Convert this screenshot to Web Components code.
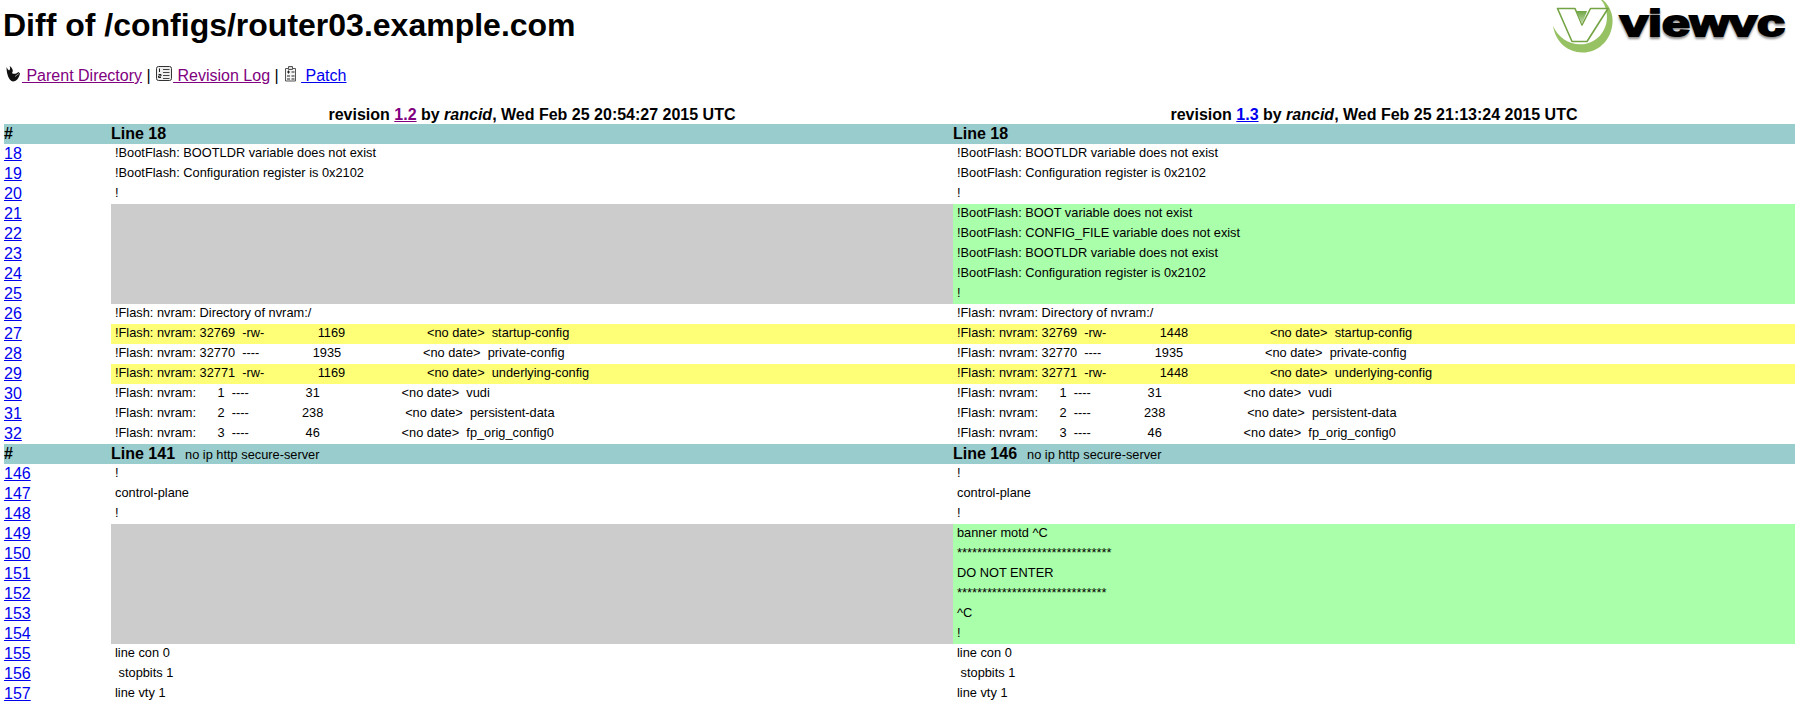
<!DOCTYPE html>
<html><head><meta charset="utf-8"><title>Diff of /configs/router03.example.com</title>
<style>
html,body{margin:0;padding:0;background:#fff;color:#000;font-family:"Liberation Sans",Arial,sans-serif;overflow:hidden}
</style></head><body>
<vv-page>
  <vv-header slot="header">Diff of /configs/router03.example.com</vv-header>
  <vv-nav slot="nav"></vv-nav>
  <diff-view slot="diff">
    <rev-row><a slot="a1" href="#r12" class="v">1.2</a><span slot="u1">rancid</span><span slot="d1">Wed Feb 25 20:54:27 2015 UTC</span><a slot="a2" href="#r13">1.3</a><span slot="u2">rancid</span><span slot="d2">Wed Feb 25 21:13:24 2015 UTC</span></rev-row>
    <hunk-row><span slot="l">Line 18</span><span slot="r">Line 18</span></hunk-row>
    <diff-row n="18"><span slot="l">!BootFlash: BOOTLDR variable does not exist</span><span slot="r">!BootFlash: BOOTLDR variable does not exist</span></diff-row>
    <diff-row n="19"><span slot="l">!BootFlash: Configuration register is 0x2102</span><span slot="r">!BootFlash: Configuration register is 0x2102</span></diff-row>
    <diff-row n="20"><span slot="l">!</span><span slot="r">!</span></diff-row>
    <diff-row n="21" kind="add"><span slot="r">!BootFlash: BOOT variable does not exist</span></diff-row>
    <diff-row n="22" kind="add"><span slot="r">!BootFlash: CONFIG_FILE variable does not exist</span></diff-row>
    <diff-row n="23" kind="add"><span slot="r">!BootFlash: BOOTLDR variable does not exist</span></diff-row>
    <diff-row n="24" kind="add"><span slot="r">!BootFlash: Configuration register is 0x2102</span></diff-row>
    <diff-row n="25" kind="add"><span slot="r">!</span></diff-row>
    <diff-row n="26"><span slot="l">!Flash: nvram: Directory of nvram:/</span><span slot="r">!Flash: nvram: Directory of nvram:/</span></diff-row>
    <diff-row n="27" kind="change"><span slot="l">!Flash: nvram: 32769  -rw-               1169                       &lt;no date&gt;  startup-config</span><span slot="r">!Flash: nvram: 32769  -rw-               1448                       &lt;no date&gt;  startup-config</span></diff-row>
    <diff-row n="28"><span slot="l">!Flash: nvram: 32770  ----               1935                       &lt;no date&gt;  private-config</span><span slot="r">!Flash: nvram: 32770  ----               1935                       &lt;no date&gt;  private-config</span></diff-row>
    <diff-row n="29" kind="change"><span slot="l">!Flash: nvram: 32771  -rw-               1169                       &lt;no date&gt;  underlying-config</span><span slot="r">!Flash: nvram: 32771  -rw-               1448                       &lt;no date&gt;  underlying-config</span></diff-row>
    <diff-row n="30"><span slot="l">!Flash: nvram:      1  ----                31                       &lt;no date&gt;  vudi</span><span slot="r">!Flash: nvram:      1  ----                31                       &lt;no date&gt;  vudi</span></diff-row>
    <diff-row n="31"><span slot="l">!Flash: nvram:      2  ----               238                       &lt;no date&gt;  persistent-data</span><span slot="r">!Flash: nvram:      2  ----               238                       &lt;no date&gt;  persistent-data</span></diff-row>
    <diff-row n="32"><span slot="l">!Flash: nvram:      3  ----                46                       &lt;no date&gt;  fp_orig_config0</span><span slot="r">!Flash: nvram:      3  ----                46                       &lt;no date&gt;  fp_orig_config0</span></diff-row>
    <hunk-row><span slot="l">Line 141</span><span slot="lx">no ip http secure-server</span><span slot="r">Line 146</span><span slot="rx">no ip http secure-server</span></hunk-row>
    <diff-row n="146"><span slot="l">!</span><span slot="r">!</span></diff-row>
    <diff-row n="147"><span slot="l">control-plane</span><span slot="r">control-plane</span></diff-row>
    <diff-row n="148"><span slot="l">!</span><span slot="r">!</span></diff-row>
    <diff-row n="149" kind="add"><span slot="r">banner motd ^C</span></diff-row>
    <diff-row n="150" kind="add"><span slot="r">*******************************</span></diff-row>
    <diff-row n="151" kind="add"><span slot="r">DO NOT ENTER</span></diff-row>
    <diff-row n="152" kind="add"><span slot="r">******************************</span></diff-row>
    <diff-row n="153" kind="add"><span slot="r">^C</span></diff-row>
    <diff-row n="154" kind="add"><span slot="r">!</span></diff-row>
    <diff-row n="155"><span slot="l">line con 0</span><span slot="r">line con 0</span></diff-row>
    <diff-row n="156"><span slot="l"> stopbits 1</span><span slot="r"> stopbits 1</span></diff-row>
    <diff-row n="157"><span slot="l">line vty 1</span><span slot="r">line vty 1</span></diff-row>
  </diff-view>
</vv-page>
<script>
const linkCss = `a{color:#0000ee;text-decoration:underline} a.v{color:#800080}`;
function def(name, html){
  customElements.define(name, class extends HTMLElement{
    constructor(){super();this.attachShadow({mode:'open'});}
    connectedCallback(){ if(!this.shadowRoot.firstChild) this.shadowRoot.innerHTML=typeof html==='function'?html(this):html; }
  });
}
def('vv-page',`<style>:host{display:block;height:704px;overflow:hidden;padding:0 8px 0 4px}</style><slot name="header"></slot><slot name="nav"></slot><slot name="diff"></slot>`);
def('diff-view',`<style>:host{display:block}</style><slot></slot>`);
def('vv-header',`<style>:host{display:flex;justify-content:space-between;align-items:flex-start;height:52px;margin-left:-1px}
h1{margin:7px 0 0;font:bold 32px/37px "Liberation Sans",Arial,sans-serif;white-space:nowrap}
svg{display:block;margin-right:-8px}</style>
<h1><slot></slot></h1>
<svg width="260" height="62" viewBox="1543 0 260 62">
<defs><filter id="b" x="-5%" y="-20%" width="110%" height="150%"><feGaussianBlur stdDeviation="1.2"/></filter>
<linearGradient id="n" x1="0" y1="0" x2="0" y2="1"><stop offset="0" stop-color="#6fa544"/><stop offset="1" stop-color="#c4dcae"/></linearGradient></defs>
<path fill="#97c264" d="M1603 0 C1611 7 1614 17 1612 27 C1609 43 1596 53 1582 52.5 C1568 52 1556 43 1553 26 C1559 39 1571 46 1585 44 C1601 41 1610 25 1606 10 C1605 6 1604 3 1601 0Z"/>
<path fill="#fff" stroke="#74a343" stroke-width="1.6" stroke-linejoin="round" d="M1557.5 8.5H1575L1582 25L1590.5 8.5H1608L1587 41.5H1572Z"/>
<path fill="url(#n)" d="M1576 11h11l-5 13z"/>
<text x="1620" y="37.5" font-family="Liberation Sans" font-weight="700" font-size="37" textLength="165" lengthAdjust="spacingAndGlyphs" fill="#888" stroke="#888" stroke-width="2" filter="url(#b)">viewvc</text>
<text x="1620" y="36" font-family="Liberation Sans" font-weight="700" font-size="37" textLength="165" lengthAdjust="spacingAndGlyphs" fill="#000" stroke="#000" stroke-width="2">viewvc</text>
</svg>`);
def('vv-nav',`<style>${linkCss}:host{display:block;height:38px;padding-top:14px;font:16px/18px "Liberation Sans",Arial,sans-serif;white-space:pre}
svg{vertical-align:-1px}</style><svg width="18" height="16" viewBox="0 0 18 16"><path d="M2.5 1 C3.5 3 4 3.5 5 4.5 C6.5 3 6.5 1.5 5.5 0 C9 2 9.5 5.5 8 7 C9.5 8.5 12 8 14.5 6 L16 7.5 C15 12.5 12 15.5 9 15.5 C5 15 2.5 8 2.5 1Z" fill="#111"/><path d="M11 10.5 l4-3" stroke="#999" stroke-width="1"/></svg><a class="v" href="#p"> Parent Directory</a> | <svg width="18" height="16" viewBox="0 0 18 16" fill="none" stroke="#333"><rect x="1.5" y=".5" width="15" height="14" rx="2" fill="#eee"/><path d="M8 3.5h6.5M8 6.5h6.5M8 9.5h6.5M8 12.5h6.5" stroke="#444"/><path d="M4.5 2.5v3.5M3.5 8.5h2.5v1.5h-2.5v1.5h2.5" stroke="#222"/></svg><a class="v" href="#l"> Revision Log</a> | <svg width="18" height="16" viewBox="0 0 18 16" fill="none" stroke="#555"><path d="M2.5 2.5h10v12.5h-10z" fill="#f4f4f4"/><path d="M5.5 .5h4v3h-4z" fill="#ddd"/><path d="M4 6h3M5.5 4.5v3M4 10h3M4 13h3M8.5 6h3M8.5 10h3M8.5 13h3" stroke="#222"/></svg><a href="#d"> Patch</a>`);
const grid=`display:grid;grid-template-columns:107px 842px 842px;`;
def('rev-row',`<style>:host{${grid}height:20px;font:bold 16px/22px "Liberation Sans",Arial,sans-serif}
div{text-align:center;white-space:nowrap} ::slotted(span[slot^=u]){font-style:italic} ::slotted(a){color:#0000ee} ::slotted(a.v){color:#800080}</style><span></span><div>revision <slot name="a1"></slot> by <slot name="u1"></slot>, <slot name="d1"></slot></div><div>revision <slot name="a2"></slot> by <slot name="u2"></slot>, <slot name="d2"></slot></div>`);
def('hunk-row',`<style>:host{${grid}height:20px;background:#99cccc;font:bold 16px/20px "Liberation Sans",Arial,sans-serif}
.x{font:12.8px/20px "Liberation Sans",Arial,sans-serif;margin-left:10px}</style><div>#</div><div><slot name="l"></slot><span class="x"><slot name="lx"></slot></span></div><div><slot name="r"></slot><span class="x"><slot name="rx"></slot></span></div>`);
def('diff-row',el=>`<style>${linkCss}:host{${grid}height:20px}
.n{font:16px/20px "Liberation Sans",Arial,sans-serif}
.c{font:12.8px/17px "Liberation Sans",Arial,sans-serif;white-space:pre;padding-left:4px;height:20px;overflow:hidden}
:host([kind=add]) .l{background:#ccc} :host([kind=add]) .r{background:#afa}
:host([kind=change]) .c{background:#ff7}</style><div class="n"><a href="#${el.getAttribute('n')}">${el.getAttribute('n')}</a></div><div class="c l"><slot name="l"></slot></div><div class="c r"><slot name="r"></slot></div>`);
</script>
</body></html>
